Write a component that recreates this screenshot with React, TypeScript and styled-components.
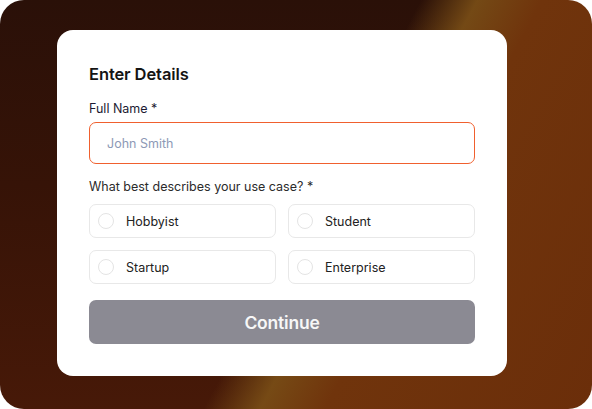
import React, { useState } from "react";
import styled, { createGlobalStyle } from "styled-components";

const GlobalStyle = createGlobalStyle`
  html, body {
    margin: 0;
    padding: 0;
    background: #ffffff;
    font-family: "Inter", "Noto Sans", sans-serif;
  }
`;

const Frame = styled.div`
  width: 592px;
  height: 409px;
  box-sizing: border-box;
  border-radius: 24px;
  padding: 30px 85px 33px 57px;
  background:
    linear-gradient(
      118deg,
      rgba(0, 0, 0, 0) 0%,
      rgba(0, 0, 0, 0) 52%,
      rgba(122, 78, 22, 0.92) 59%,
      rgba(112, 52, 12, 1) 67%,
      #6b2e0a 100%
    ),
    linear-gradient(180deg, #2a1008 0%, #361307 45%, #471908 100%);
`;

const Card = styled.form`
  width: 450px;
  box-sizing: border-box;
  background: #ffffff;
  border-radius: 16px;
  padding: 32px;
  display: flex;
  flex-direction: column;
`;

const Title = styled.h2`
  margin: 0;
  font-size: 16.5px;
  line-height: 24px;
  font-weight: 600;
  color: #141414;
  letter-spacing: -0.1px;
`;

const Label = styled.label<{ $dark?: boolean }>`
  display: block;
  margin-top: 14px;
  font-size: 12.5px;
  line-height: 18px;
  color: ${(p) => (p.$dark ? "#1c1b33" : "#2b2b2b")};
`;

const TextInput = styled.input`
  margin-top: 4px;
  height: 42px;
  box-sizing: border-box;
  width: 100%;
  border: 1px solid #f0602e;
  border-radius: 7px;
  padding: 0 17px;
  font-family: inherit;
  font-size: 12.5px;
  color: #222;
  caret-color: #111;
  outline: none;

  &::placeholder {
    color: #8d99b6;
  }
`;

const OptionGrid = styled.div`
  margin-top: 8px;
  display: grid;
  grid-template-columns: 1fr 1fr;
  column-gap: 12px;
  row-gap: 12px;
`;

const Option = styled.label<{ $checked: boolean }>`
  height: 34px;
  box-sizing: border-box;
  border: 1px solid ${(p) => (p.$checked ? "#f0602e" : "#e8e8e8")};
  border-radius: 7px;
  display: flex;
  align-items: center;
  padding-left: 8px;
  gap: 12px;
  font-size: 12.5px;
  color: #222;
  cursor: pointer;
`;

const Circle = styled.span<{ $checked: boolean }>`
  width: 16px;
  height: 16px;
  box-sizing: border-box;
  border-radius: 50%;
  border: 1px solid ${(p) => (p.$checked ? "#f0602e" : "#e4e4e4")};
  background: ${(p) => (p.$checked ? "#f0602e" : "#fff")};
`;

const Button = styled.button`
  margin-top: 16px;
  height: 44px;
  border: none;
  border-radius: 7px;
  background: #8b8a93;
  color: #f7f7f7;
  font-family: inherit;
  font-size: 17.5px;
  font-weight: 600;
  letter-spacing: -0.2px;
`;

const options = ["Hobbyist", "Student", "Startup", "Enterprise"];

const App: React.FC = () => {
  const [name, setName] = useState("");
  const [useCase, setUseCase] = useState<string | null>(null);

  return (
    <>
      <GlobalStyle />
      <Frame>
        <Card onSubmit={(e) => e.preventDefault()}>
          <Title>Enter Details</Title>
          <Label $dark htmlFor="full-name">
            Full Name *
          </Label>
          <TextInput
            id="full-name"
            type="text"
            placeholder="John Smith"
            autoFocus
            value={name}
            onChange={(e) => setName(e.target.value)}
          />
          <Label>What best describes your use case? *</Label>
          <OptionGrid>
            {options.map((o) => (
              <Option key={o} $checked={useCase === o} onClick={() => setUseCase(o)}>
                <Circle $checked={useCase === o} />
                {o}
              </Option>
            ))}
          </OptionGrid>
          <Button type="submit" disabled={!name || !useCase}>
            Continue
          </Button>
        </Card>
      </Frame>
    </>
  );
};

export default App;
